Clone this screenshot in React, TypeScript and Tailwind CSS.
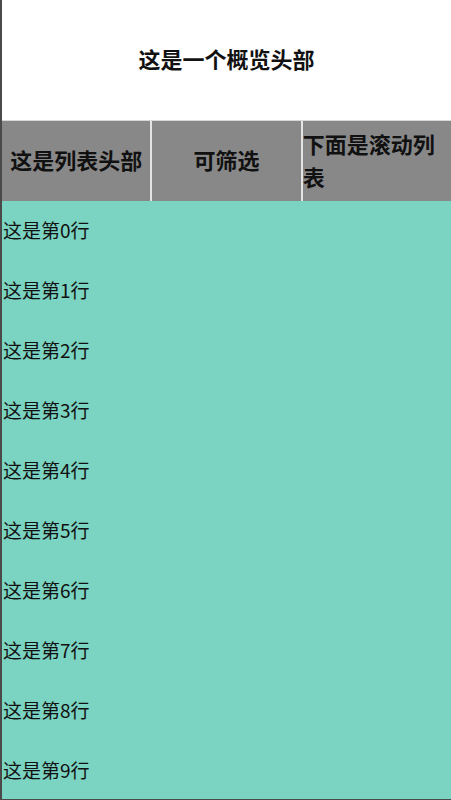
const COLUMNS = ['这是列表头部', '可筛选', '下面是滚动列表']

const ROWS = Array.from({ length: 10 }, (_, i) => `这是第${i}行`)

function OverviewHeader() {
  return (
    <div className="flex h-[120px] shrink-0 items-center justify-center bg-white pb-[4px]">
      <h1 className="text-[22px] font-bold text-[#111]">这是一个概览头部</h1>
    </div>
  )
}

function ListHeader() {
  return (
    <div className="flex h-[81px] shrink-0 divide-x-2 divide-[#e4e4e4] border-t border-[#d8d8d8] bg-[#888888]">
      {COLUMNS.map((c) => (
        <div key={c} className="flex flex-1 items-center justify-center pb-[3px]">
          <span className="text-[22px] font-bold text-[#111]">{c}</span>
        </div>
      ))}
    </div>
  )
}

export default function App() {
  return (
    <div
      className="flex h-[800px] w-full flex-col overflow-hidden border-b border-l-2 border-[#4a4a4a] bg-[#7bd3c2]"
      style={{ fontFamily: '"Noto Sans CJK SC", "Noto Sans", sans-serif' }}
    >
      <OverviewHeader />
      <ListHeader />
      <div className="flex-1 overflow-hidden">
        {ROWS.map((r) => (
          <div
            key={r}
            className="flex h-[60px] items-center pb-px pl-px text-[19px] text-[#111]"
          >
            {r}
          </div>
        ))}
      </div>
    </div>
  )
}
